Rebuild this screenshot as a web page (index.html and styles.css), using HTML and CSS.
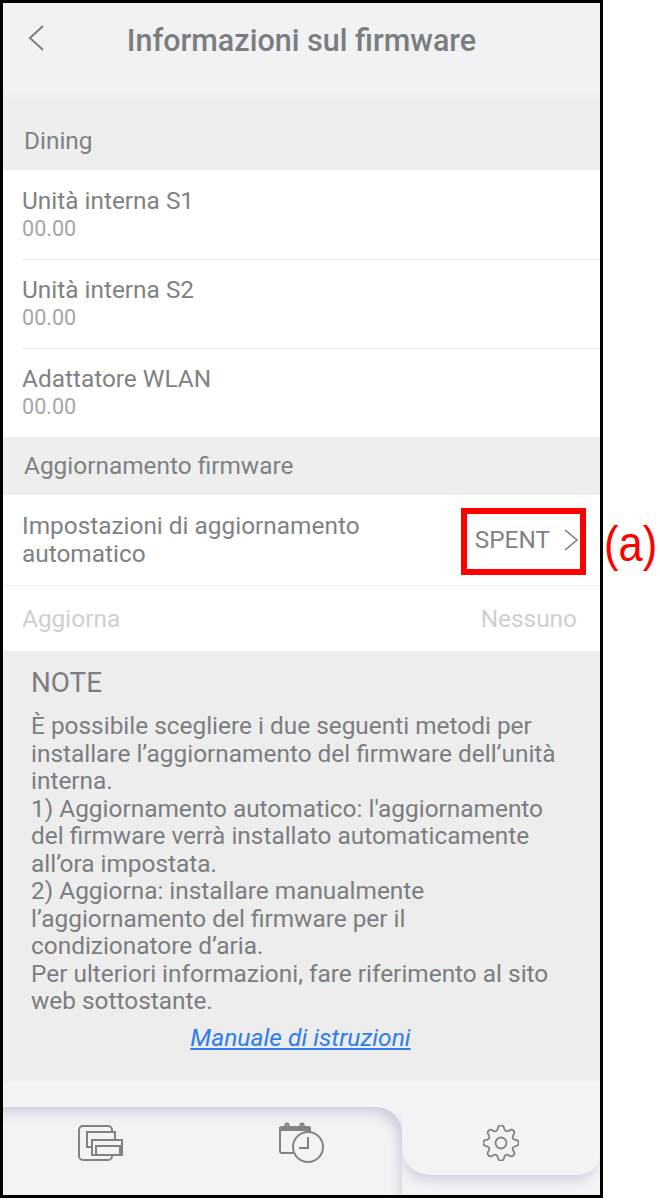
FILE: index.html
```html
<!DOCTYPE html>
<html lang="it">
<head>
    <meta charset="UTF-8">
    <meta name="viewport" content="width=device-width, initial-scale=1.0">
    <title>Informazioni sul firmware</title>
    <link rel="stylesheet" href="styles.css">
</head>
<body>
    <div class="phone">
        <!-- Header -->
        <div class="header">
            <svg class="back-icon" width="18" height="28" viewBox="0 0 18 28" aria-hidden="true">
                <path d="M16 2 L3 14 L16 26" fill="none" stroke="#7b7d80" stroke-width="2"></path>
            </svg>
            <h1>Informazioni sul firmware</h1>
        </div>

        <div class="section-title section-first">Dining</div>
        <div class="row row-first">
            <div class="row-name">Unità interna S1</div>
            <div class="row-value">00.00</div>
        </div>
        <div class="row">
            <div class="row-name">Unità interna S2</div>
            <div class="row-value">00.00</div>
        </div>
        <div class="row row-last">
            <div class="row-name">Adattatore WLAN</div>
            <div class="row-value">00.00</div>
        </div>

        <div class="section-title">Aggiornamento firmware</div>
        <div class="setting">
            <div class="setting-name">Impostazioni di aggiornamento<br>automatico</div>
            <div class="setting-state">
                <span>SPENT</span>
                <svg width="16" height="24" viewBox="0 0 16 24" aria-hidden="true">
                    <path d="M2 2 L14 12 L2 22" fill="none" stroke="#7b7d80" stroke-width="1.6"></path>
                </svg>
            </div>
        </div>
        <div class="update-row">
            <span>Aggiorna</span>
            <span>Nessuno</span>
        </div>

        <!-- Note -->
        <div class="note">
            <div class="note-title">NOTE</div>
            <p>È possibile scegliere i due seguenti metodi per<br>installare l’aggiornamento del firmware dell’unità<br>interna.<br>1) Aggiornamento automatico: l'aggiornamento<br>del firmware verrà installato automaticamente<br>all’ora impostata.<br>2) Aggiorna: installare manualmente<br>l’aggiornamento del firmware per il<br>condizionatore d’aria.<br>Per ulteriori informazioni, fare riferimento al sito<br>web sottostante.</p>
            <a class="note-link" href="#">Manuale di istruzioni</a>
        </div>

        <!-- Bottom tabs -->
        <div class="tabs">
            <div class="tabs-left">
                <div class="tab">
                    <svg width="45" height="36" viewBox="0 0 45 36" aria-hidden="true" fill="none" stroke="#808285" stroke-width="2">
                        <rect x="1" y="1" width="33" height="34" rx="4"></rect>
                        <rect x="9" y="7" width="28" height="15" fill="#f2f3f5"></rect>
                        <rect x="14" y="15" width="30" height="15" fill="#f2f3f5"></rect>
                        <rect x="18" y="21" width="24" height="9"></rect>
                    </svg>
                </div>
                <div class="tab">
                    <svg width="46" height="42" viewBox="0 0 46 42" aria-hidden="true" fill="none" stroke="#808285" stroke-width="2">
                        <path d="M14 31 H3 Q1 31 1 29 V7 Q1 5 3 5 H29 Q31 5 31 7 V10"></path>
                        <path d="M1 8 V6 H31 V8 Z" fill="#808285"></path>
                        <circle cx="8" cy="3" r="1.6"></circle>
                        <circle cx="23" cy="3" r="1.6"></circle>
                        <circle cx="29" cy="25" r="15" fill="#f2f3f5"></circle>
                        <path d="M29 15 V26 H20"></path>
                    </svg>
                </div>
            </div>
            <div class="tab tab-active">
                <svg width="36" height="36" viewBox="0 0 36 36" aria-hidden="true" fill="none" stroke="#808285" stroke-width="1.8">
                    <circle cx="18" cy="18" r="5.5"></circle>
                    <path d="M15.2 2.2 A3 3 0 0 1 20.8 2.2 Q21.8 8.8 27.2 4.9 A3 3 0 0 1 31.1 8.8 Q27.2 14.2 33.8 15.2 A3 3 0 0 1 33.8 20.8 Q27.2 21.8 31.1 27.2 A3 3 0 0 1 27.2 31.1 Q21.8 27.2 20.8 33.8 A3 3 0 0 1 15.2 33.8 Q14.2 27.2 8.8 31.1 A3 3 0 0 1 4.9 27.2 Q8.8 21.8 2.2 20.8 A3 3 0 0 1 2.2 15.2 Q8.8 14.2 4.9 8.8 A3 3 0 0 1 8.8 4.9 Q14.2 8.8 15.2 2.2 Z"></path>
                </svg>
            </div>
        </div>

        <div class="callout-box"></div>
    </div>
    <div class="callout-label">(a)</div>
</body>
</html>
```

FILE: styles.css
```css
/* General Body Styling */
body {
    margin: 0;
    background-color: #ffffff;
    font-family: Roboto, sans-serif;
    position: relative;
}

.phone {
    position: relative;
    display: flex;
    flex-direction: column;
    width: 597px;
    height: 1192px;
    border: 3px solid #000000;
    background-color: #f2f3f5;
    overflow: hidden;
}

/* Header */
.header {
    position: relative;
    height: 99px;
    padding-top: 17px;
    box-sizing: border-box;
    text-align: center;
    background: linear-gradient(#f1f2f4 85%, #eeeeee);
    flex: none;
}

.header h1 {
    margin: 0;
    font-size: 30.5px;
    line-height: 42px;
    font-weight: 500;
    color: #7b7d80;
}

.back-icon {
    position: absolute;
    left: 24px;
    top: 21px;
}

/* Sections */
.section-title {
    height: 58px;
    padding-left: 21px;
    font-size: 24.4px;
    line-height: 58px;
    color: #7f8183;
    background-color: #eeeeee;
    flex: none;
}

.section-first {
    height: 68px;
    line-height: 78px;
}

.row {
    height: 89px;
    padding: 14px 0 0 19px;
    box-sizing: border-box;
    background-color: #ffffff;
    background-image: linear-gradient(#ececec, #ececec);
    background-size: 100% 1px;
    background-repeat: no-repeat;
    background-position: 19px bottom;
    flex: none;
}

.row-first {
    height: 90px;
    padding-top: 15px;
}

.row-last {
    height: 88px;
    background-image: none;
}

.row-name {
    font-size: 24.4px;
    line-height: 32px;
    color: #7f8183;
}

.row-value {
    font-size: 21.6px;
    line-height: 24px;
    color: #a6a6a6;
}

.setting {
    display: flex;
    justify-content: space-between;
    align-items: center;
    height: 91px;
    padding: 0 21px 0 19px;
    box-sizing: border-box;
    font-size: 24.4px;
    line-height: 28px;
    color: #7f8183;
    background-color: #ffffff;
    border-bottom: 1px solid #f0f0f0;
    flex: none;
}

.setting-state {
    display: flex;
    align-items: center;
    gap: 13px;
}

.update-row {
    display: flex;
    justify-content: space-between;
    align-items: center;
    height: 65px;
    padding: 0 23px 0 19px;
    box-sizing: border-box;
    font-size: 24.4px;
    color: #cfcfcf;
    background-color: #ffffff;
    flex: none;
}

/* Note */
.note {
    height: 430px;
    padding: 14px 28px 0;
    box-sizing: border-box;
    background-color: #ededed;
    color: #7b7d80;
    flex: none;
}

.note-title {
    font-size: 27.8px;
    line-height: 36px;
}

.note p {
    margin: 11px 0 0;
    font-size: 24.4px;
    line-height: 27.5px;
}

.note-link {
    display: block;
    margin-top: 9px;
    margin-right: 2px;
    text-align: center;
    font-size: 24.6px;
    line-height: 28px;
    font-style: italic;
    color: #2f7cf0;
}

/* Bottom tabs */
.tabs {
    display: flex;
    flex: 1;
    padding-top: 26px;
    box-sizing: border-box;
    background-color: #f2f3f5;
}

.tabs-left {
    display: flex;
    width: 402px;
    margin-left: -3px;
    padding-bottom: 16px;
    box-sizing: border-box;
    border-top-right-radius: 26px;
    box-shadow: inset -8px 12px 14px -8px #c6cad9;
}

.tabs-left .tab {
    flex: 1;
}

.tab {
    display: flex;
    justify-content: center;
    align-items: center;
}

.tab-active {
    flex: 1;
    height: 68px;
    padding: 4px 0 0 0;
    box-sizing: border-box;
    border-radius: 0 0 22px 28px;
    background-color: #f2f3f5;
    box-shadow: -2px 8px 12px -3px #cdd0de;
}

/* Annotation */
.callout-box {
    position: absolute;
    left: 458px;
    top: 505px;
    width: 113px;
    height: 55px;
    border: 6px solid #ff0000;
}

.callout-label {
    position: absolute;
    left: 604px;
    top: 516px;
    font-family: "Liberation Sans", sans-serif;
    font-size: 50px;
    line-height: 56px;
    color: #ff0000;
    transform: scaleX(0.87);
    transform-origin: left center;
}
```
